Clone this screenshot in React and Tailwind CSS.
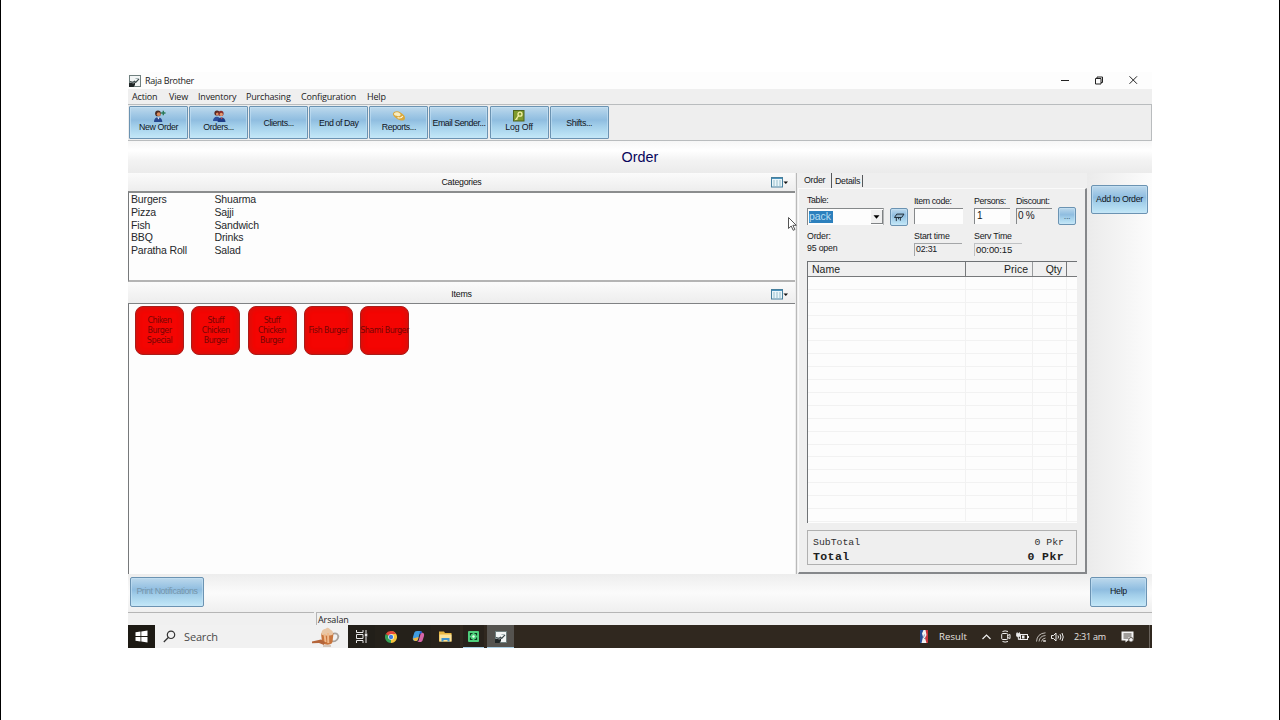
import React from "react";

const gel =
  "border border-[#6b93b2] bg-[linear-gradient(180deg,#bdd9ec_0%,#a4cae6_22%,#8fbde0_42%,#a3cfea_62%,#c3e8f8_100%)] text-[#10151c] shadow-[inset_0_0_0_1px_rgba(200,228,245,0.55)]";
const sans = "font-['Liberation_Sans',Arial,sans-serif]";
const ui = "font-['Open_Sans','Noto_Sans',sans-serif]";

function NewOrderIcon() {
  return (
    <svg className="h-3 w-3.5" viewBox="0 0 14 12">
      <circle cx="6" cy="3.4" r="2.9" fill="#4a2a22" />
      <circle cx="6.7" cy="4.2" r="1.9" fill="#d98a5c" />
      <path d="M2 12c0-3 1.500-4.800 4-4.800s4.300 1.800 4.300 4.800z" fill="#27488f" />
      <path d="M5.200 7.300l1.300 2.200 1.100-2.200z" fill="#e9eef7" />
      <path d="M11.300.8v4.400M9.100 3h4.400" stroke="#2c7a58" strokeWidth="1.400" />
    </svg>
  );
}

function OrdersIcon() {
  return (
    <svg className="h-3 w-3.5" viewBox="0 0 14 12">
      <circle cx="5" cy="3" r="2.600" fill="#5a2620" />
      <circle cx="5.400" cy="3.900" r="1.500" fill="#dd8b62" />
      <circle cx="9" cy="3.400" r="2.600" fill="#8a2d2a" />
      <circle cx="9.300" cy="4.400" r="1.600" fill="#e39a70" />
      <path d="M1 11c0-2.500 1.500-4.300 3.800-4.300S8.500 8.500 8.500 11z" fill="#2d4f9c" />
      <path d="M5.600 12c0-2.700 1.500-4.600 3.900-4.600s4 1.900 4 4.600z" fill="#1f3d86" />
      <path d="M8.600 7.500l1 1.900 1-1.900z" fill="#d84a3c" />
    </svg>
  );
}

function ReportsIcon() {
  return (
    <svg className="h-3 w-3.5" viewBox="0 0 14 12">
      <path d="M1 3.500C2 1 6 .5 8.500 2.500s4.500 3 4.500 5.500-2.500 3-5 2.200S.3 6 1 3.500z" fill="#d9a83c" />
      <path d="M2 3.500C3.500 1.800 6.500 2 8 3.500S8 6.300 6 6.200 1.500 5 2 3.500z" fill="#f7ecc0" />
      <path d="M5.500 7.500c2 .8 4.300.3 5.200-1.500" stroke="#fff6d8" strokeWidth="1.200" fill="none" />
    </svg>
  );
}

function KeyIcon() {
  return (
    <svg className="h-3 w-3" viewBox="0 0 12 12">
      <rect x=".5" y=".5" width="10.500" height="10.500" fill="#7f9a2c" stroke="#4f6420" />
      <circle cx="7" cy="4.200" r="2" fill="none" stroke="#f4efa6" strokeWidth="1.300" />
      <path d="M5.600 5.700L3 9.300l1.600-.3" fill="none" stroke="#f4efa6" strokeWidth="1.200" />
    </svg>
  );
}

function AppIcon({ className }) {
  return (
    <svg className={className} viewBox="0 0 12 12">
      <rect x=".5" y=".5" width="11" height="11" fill="#f2f5f5" stroke="#70807f" />
      <path d="M1 6.500l3 .8 1.500-1 1.200 1.200L10 3.800" fill="none" stroke="#3c4a4c" strokeWidth="1.200" />
      <path d="M0 12V8.200l2-.7 2.200 1L6 7.300V10l-1.500 2z" fill="#1f2526" />
      <path d="M6.500 3.500h3" stroke="#a7b7b8" />
    </svg>
  );
}

function GridIcon() {
  return (
    <svg className="h-[11px] w-[18px]" viewBox="0 0 18 11">
      <rect x=".5" y=".5" width="11" height="9.500" fill="#eaf6fa" stroke="#467f9d" />
      <path d="M1 1.500h10" stroke="#4c93bd" />
      <path d="M2.500 4h1M5.500 4h1M8.500 4h1M2.500 6h1M5.500 6h1M8.500 6h1M2.500 8h1M5.500 8h1M8.500 8h1" stroke="#44869f" />
      <path d="M12.500 4.500h4.500l-2.200 2.500z" fill="#111" />
    </svg>
  );
}

function ToolButton({ label, icon, track = "tracking-[-0.4px]" }) {
  return (
    <button className={`${gel} ${sans} flex h-[33px] w-[59px] shrink-0 flex-col items-center justify-center rounded-[1px] text-[8.800px] leading-[10px] whitespace-nowrap ${icon ? "pb-[3px]" : ""} ${track}`}>
      {icon}
      <span>{label}</span>
    </button>
  );
}

function PaneHeader({ title, className }) {
  return (
    <div className={`flex shrink-0 bg-linear-to-b from-[#fbfbfb] to-[#ededed] ${className}`}>
      <div className={`${sans} flex-1 pl-[24px] text-center text-[8.800px] leading-[10px] tracking-[-0.25px] text-[#111]`}>{title}</div>
      <div className="w-[24px]">
        <GridIcon />
      </div>
    </div>
  );
}

function Tile({ lines }) {
  return (
    <div className="flex size-[49px] shrink-0 flex-col items-center justify-center rounded-[8px] border border-[#a81d1a] bg-[#f40502] pt-px text-center font-['DejaVu_Sans',sans-serif] text-[8px] leading-[10px] tracking-[-0.5px] whitespace-nowrap text-[#760604] shadow-[inset_0_0_4px_2px_rgba(205,20,15,0.75)]">
      {lines.map((l) => (
        <span key={l}>{l}</span>
      ))}
    </div>
  );
}

const categories = [
  ["Burgers", "Shuarma"],
  ["Pizza", "Sajji"],
  ["Fish", "Sandwich"],
  ["BBQ", "Drinks"],
  ["Paratha Roll", "Salad"],
];

const tiles = [
  ["Chiken", "Burger", "Special"],
  ["Stuff", "Chicken", "Burger"],
  ["Stuff", "Chicken", "Burger"],
  ["Fish Burger"],
  ["Shami Burger"],
];

const sunken = "border-t border-l border-[#85888a] bg-[#fdfdfd]";

function LeftPane() {
  return (
    <div className="flex w-[667px] shrink-0 flex-col">
      <PaneHeader title="Categories" className="h-[18px] pt-[4px]" />
      <div className="h-[91px] shrink-0 border-t-2 border-b-2 border-l border-t-[#8b8d8e] border-b-[#b4b4b4] border-l-[#77797b] bg-[#fdfdfd] pl-[2px]">
        {categories.map(([a, b]) => (
          <div key={a} className={`${sans} flex h-[12.750px] text-[10.500px] leading-[12.750px] tracking-[-0.15px] text-[#25282b]`}>
            <span className="w-[83.500px]">{a}</span>
            <span>{b}</span>
          </div>
        ))}
      </div>
      <PaneHeader title="Items" className="h-[21px] pt-[7px]" />
      <div className="flex flex-1 items-start gap-[7.250px] border-t border-l border-t-[#808284] border-l-[#77797b] bg-[#fdfdfd] pt-[2px] pl-[6px]">
        {tiles.map((t, i) => (
          <Tile key={i} lines={t} />
        ))}
      </div>
    </div>
  );
}

function Field({ label, children, className }) {
  return (
    <div className={className}>
      <div className="h-[11px] whitespace-nowrap">{label}</div>
      {children}
    </div>
  );
}

function OrderForm() {
  return (
    <div className={`${sans} text-[8.800px] leading-[8px] tracking-[-0.35px] text-[#15181b]`}>
      <div className="flex h-[35px] pt-[8px]">
        <div className="mr-[6px] w-[77px]">
          <div className="-mt-px h-[12px]">Table:</div>
          <div className={`${sunken} flex h-[17px] border-r border-r-[#b5b7b8]`}>
            <span className="m-[2px] ml-px h-[12px] w-[24px] bg-[#2c80bd] text-[10.500px] leading-[11px] tracking-[-0.1px] text-[#b7def2]">pack</span>
            <span className="mt-px ml-auto flex h-[14px] w-[12px] items-center justify-center border-r border-b border-[#7f8284] bg-[#f0f0f0]">
              <svg className="h-[4px] w-[7px]" viewBox="0 0 7 4">
                <path d="M.5.300h6L3.500 3.700z" fill="#000" />
              </svg>
            </span>
          </div>
        </div>
        <button className={`${gel} mt-[11px] mr-[6px] flex size-[18px] items-center justify-center rounded-[2px]`}>
          <svg className="h-[9px] w-[12px]" viewBox="0 0 13 10">
            <path d="M4 1.200h8L9.500 5h-8z" fill="#8fb2ca" stroke="#16232d" />
            <path d="M3.500 5v4M8 5v3.500M6 5v2" stroke="#16232d" />
          </svg>
        </button>
        <Field label="Item code:" className="mr-[11px] w-[49px]">
          <div className={`${sunken} h-[16px]`} />
        </Field>
        <Field label="Persons:" className="mr-[6px] w-[36px]">
          <div className={`${sunken} h-[16px] pl-[2px] text-[10px] leading-[14px]`}>1</div>
        </Field>
        <Field label="Discount:" className="mr-[6px] w-[36px]">
          <div className="h-[16px] border-t border-l border-[#85888a] bg-[#efefef] pl-px text-[10px] leading-[14px]">0 %</div>
        </Field>
        <button className={`${gel} mt-[10px] size-[18px] rounded-[2px] pb-px text-[9px] leading-[12px]`}>
          <span className="text-[#47667d]">...</span>
        </button>
      </div>
      <div className="flex h-[37px] pt-[8px]">
        <div className="w-[107px] tracking-[-0.2px]">
          <div className="h-[12px]">Order:</div>
          <div>95 open</div>
        </div>
        <div className="mr-[12px] w-[48px]">
          <div className="h-[11px] tracking-[-0.2px]">Start time</div>
          <div className="h-[13px] border-t border-l border-[#a4a6a8] pl-px leading-[11px] tracking-[-0.2px]">02:31</div>
        </div>
        <div className="w-[48px]">
          <div className="h-[11px] tracking-[-0.2px] whitespace-nowrap">Serv Time</div>
          <div className="h-[13px] border-t border-l border-[#c0c2c4] pl-px text-[9.500px] leading-[12px] tracking-[-0.1px]">00:00:15</div>
        </div>
      </div>
    </div>
  );
}

function OrderTable() {
  return (
    <div className="flex h-[262px] flex-col overflow-hidden border-t border-l border-[#6f7275] bg-[#fdfdfd]">
      <div className={`${sans} flex h-[15px] shrink-0 border-b border-[#77797b] bg-[#f0f0f0] text-[10.500px] leading-[15px] text-[#1b1e21]`}>
        <span className="w-[158px] border-r border-[#77797b] pl-[4px]">Name</span>
        <span className="w-[67px] border-r border-[#9a9c9e] pr-[4px] text-right">Price</span>
        <span className="w-[34px] border-r border-[#77797b] pr-[4px] text-right">Qty</span>
      </div>
      {Array.from({ length: 19 }, (_, i) => (
        <div key={i} className="flex h-[12.900px] shrink-0 border-b border-[#f2f2f2]">
          <span className="w-[158px] border-r border-[#f2f2f2]" />
          <span className="w-[67px] border-r border-[#f2f2f2]" />
          <span className="w-[34px] border-r border-[#f2f2f2]" />
        </div>
      ))}
    </div>
  );
}

function OrderPanel() {
  return (
    <div className="flex w-[291px] shrink-0 flex-col border-l border-[#b9b9b9] bg-[#efefef]">
      <div className={`${sans} flex h-[15px] shrink-0 pl-[3px] text-[8.800px] leading-[10px] tracking-[-0.25px] text-[#15181b]`}>
        <div className="w-[32px] border-r border-[#55585b] pt-[2px] pl-[4px]">Order</div>
        <div className="mt-[2px] h-[12px] w-[31px] border-r border-[#55585b] pt-px pl-[3px]">Details</div>
      </div>
      <div className="ml-px flex flex-1 flex-col border-t border-r-2 border-b-2 border-l border-t-[#fafafa] border-r-[#85878a] border-b-[#85878a] border-l-[#fafafa] pr-[8px] pl-[8px]">
        <OrderForm />
        <OrderTable />
        <div className="mt-[7px] h-[35px] border border-[#b0b0b0] px-[5px] pt-[5px] font-['Liberation_Mono','Courier_New',monospace] text-[#303030]">
          <div className="flex h-[14px] justify-between pr-[7px] text-[9.800px] leading-[13px]">
            <span>SubTotal</span>
            <span>0 Pkr</span>
          </div>
          <div className="flex h-[14px] justify-between pr-[7px] text-[11.500px] leading-[14px] font-bold tracking-[0.4px] text-[#202020]">
            <span>Total</span>
            <span>0 Pkr</span>
          </div>
        </div>
      </div>
    </div>
  );
}

function Taskbar() {
  return (
    <div className={`${ui} flex h-[23px] shrink-0 bg-[#30281f] text-[#e8e4e0]`}>
      <div className="flex w-[27px] items-center justify-center bg-[#1d1a14]">
        <svg className="size-[13px]" viewBox="0 0 13 13">
          <path d="M.5 2.200l5-.7v4.600h-5zM6.300 1.400l6.200-.9v5.600H6.300zM.5 6.900h5v4.600l-5-.7zM6.300 6.900h6.200v5.600l-6.200-.9z" fill="#fff" />
        </svg>
      </div>
      <div className="flex w-[193px] items-center bg-[#f1f1f1] text-[#4a4a4a]">
        <svg className="ml-[8px] size-[13px]" viewBox="0 0 13 13">
          <circle cx="8" cy="4.800" r="3.700" fill="none" stroke="#333" strokeWidth="1.200" />
          <path d="M5.300 7.500L.8 12" stroke="#333" strokeWidth="1.200" />
        </svg>
        <span className="ml-[8px] text-[11px] leading-[14px] tracking-[-0.15px]">Search</span>
        <svg className="ml-auto mr-[8px] h-[22px] w-[29px]" viewBox="0 0 29 22">
          <path d="M21 8c5-2 7 1 6 4s-4 4-6 3" fill="none" stroke="#a9a39d" strokeWidth="1.800" />
          <path d="M10 7h12.500l-1 9c-.5 3.500-9.500 3.500-10.500 0z" fill="#c9753c" />
          <path d="M11 5c2-3 4-1 4.500-3C18 1 18 3 20 4s2 2 2 4-10 2.500-12 0z" fill="#e9c6a4" />
          <path d="M13.500 8l1 8M17 7l.3 10" stroke="#efb98b" strokeWidth="2" />
          <path d="M10 13.500l-9 2v1.700L8 17l5 2 1-3z" fill="#b4653a" />
          <path d="M12 20h8" stroke="#c8b8aa" strokeWidth="1.500" />
        </svg>
      </div>
      <div className="flex w-[27px] items-center justify-center bg-[#221f19]">
        <svg className="size-[13px]" viewBox="0 0 13 13" fill="none" stroke="#e8e8e8">
          <path d="M1.500 0v2.500h6.500V0M1.500 13v-2.500h6.500V13M1.500 4.500h6.500v4H1.500zM11 0v3M11 7v6" />
          <rect x="10.300" y="4" width="1.500" height="2" fill="#fff" />
        </svg>
      </div>
      <div className="flex w-[31px] items-center justify-center bg-[#25211a]">
        <svg className="size-[12px]" viewBox="0 0 24 24">
          <path d="M12 12V0a12 12 0 0 1 10.400 6A12 12 0 0 1 12 24z" fill="#f5c33b" />
          <path d="M12 12L12 24A12 12 0 0 1 1.600 6z" fill="#36a055" />
          <path d="M1.600 6A12 12 0 0 1 22.400 6H12v6z" fill="#e5483a" />
          <circle cx="12" cy="12" r="5.600" fill="#fff" />
          <circle cx="12" cy="12" r="4.400" fill="#3d7de0" />
        </svg>
      </div>
      <div className="flex w-[25px] items-center justify-center bg-[#25211a]">
        <svg className="size-[13px]" viewBox="0 0 13 13">
          <path d="M5 1h3.500c1 0 1.300.8 1.600 1.800L7.500 4 6 9.500C5.600 11 5 11 3.500 11 1 11 .3 9.500 1 7l1.200-4C2.600 1.700 3.500 1 5 1z" fill="#3f9ce0" />
          <path d="M9 2.500c2.500 0 3.600 1 3 3.500l-1.300 4C10.300 11.500 9.500 12 8 12H5c1.200 0 1.500-1 1.800-2z" fill="#d765a8" />
          <path d="M1 8.500c.3 1.500 1 2.500 2.500 2.500C5 11 5.500 10.500 6 9l.5-2z" fill="#f0b640" />
          <path d="M8 1.200c1.500 0 1.800.8 2.100 1.800L7.500 4z" fill="#2a56c4" />
        </svg>
      </div>
      <div className="flex w-[29px] items-center justify-center bg-[#28221b]">
        <svg className="h-[11px] w-[13px]" viewBox="0 0 13 11">
          <path d="M0 .5h5l1 1.500h6.500v8.500H0z" fill="#e8b640" />
          <path d="M.5 3.500h12v7H.5z" fill="#fbe39a" />
          <path d="M2.500 7h8v3.500h-2V9h-4v1.500h-2z" fill="#3f94cf" />
        </svg>
      </div>
      <div className="mx-[3px] flex w-[21px] items-center justify-center border-b border-[#a9cfe6] bg-[#28221b] pt-px">
        <svg className="size-[11px]" viewBox="0 0 11 11">
          <rect width="11" height="11" rx="1" fill="#4fd07c" />
          <path d="M2.500 4.500v-2h2M6.500 2.500h2v2M8.500 6.500v2h-2M4.500 8.500h-2v-2" fill="none" stroke="#0f3c22" strokeWidth="1.200" />
          <circle cx="5.500" cy="5.500" r="1.200" fill="#e6ffee" />
        </svg>
      </div>
      <div className="flex w-[27px] items-center justify-center border-b border-[#a9cfe6] bg-[#55534f] pt-px">
        <AppIcon className="size-[12px]" />
      </div>
      <div className="flex flex-1 items-center justify-end text-[9.500px] leading-[12px]">
        <svg className="mr-[11px] h-[13px] w-[8px]" viewBox="0 0 8 13">
          <rect width="8" height="13" rx="1" fill="#f2f2f2" />
          <path d="M0 0h3.500L2 3.500l1 3.500-1.500 6H0z" fill="#244a94" />
          <path d="M5.500 0H8v13H6.500L5 8l1.500-3z" fill="#c8343c" />
          <path d="M4.500 4.500l-1 3 1.500 1.500" fill="none" stroke="#5b6da0" strokeWidth=".7" />
        </svg>
        <span className="w-[43px] tracking-[0.1px]">Result</span>
        <svg className="mr-[10px] h-[6px] w-[9px]" viewBox="0 0 9 6" fill="none" stroke="#eee" strokeWidth="1.200">
          <path d="M.5 5l4-4 4 4" />
        </svg>
        <svg className="mr-[5px] h-[13px] w-[10px]" viewBox="0 0 10 13" fill="none" stroke="#eee">
          <path d="M1.500 1.500Q4 .3 7 1.500M1.500 11.500q2.500 1.200 5.500 0" />
          <rect x=".7" y="3.500" width="6" height="6" rx="1" />
          <path d="M6.500 5.500L9 4.500v4L6.500 7.500" />
        </svg>
        <svg className="mr-[7px] h-[10px] w-[13px]" viewBox="0 0 13 10">
          <rect x="4.500" y="2.500" width="7" height="5" fill="none" stroke="#eee" />
          <path d="M12.500 4v2" stroke="#eee" />
          <rect x="6" y="3.500" width="2.500" height="3" fill="#eee" />
          <path d="M.5 1.500h3.500V4q-.5 1-1.700 1T.5 4zM1.200 0v2M3.400 0v2M2.300 5v2.500h2" fill="#eee" stroke="#eee" strokeWidth=".7" />
        </svg>
        <svg className="mr-[5px] size-[10px]" viewBox="0 0 10 10" fill="none" stroke="#bdb9b4">
          <path d="M.5 9.500Q1 1.500 9.500.8M3 9.500Q3.500 4 9.500 3.500M5.500 9.500Q6 6.500 9.500 6" />
          <path d="M7.500 8.500h2v1h-2z" fill="#fff" />
        </svg>
        <svg className="mr-[9px] h-[10px] w-[14px]" viewBox="0 0 14 10" fill="none" stroke="#eee">
          <path d="M.5 3.500h2L5 1v8L2.500 6.500h-2zM7 3.500q1 1.500 0 3M9 2.200q1.800 2.800 0 5.600M11 1q2.500 4 0 8" />
        </svg>
        <span className="w-[47px] text-[9px] tracking-[-0.25px] whitespace-nowrap">2:31 am</span>
        <svg className="mr-[15px] h-[12px] w-[13px]" viewBox="0 0 13 12">
          <path d="M.5.500h12v9H7l-2.500 2v-2h-4z" fill="#f4f4f4" />
          <path d="M2.500 3h8M2.500 5h8M2.500 7h5" stroke="#3a332c" strokeWidth=".9" />
          <circle cx="10" cy="8.800" r="2.300" fill="#f4f4f4" stroke="#3a332c" strokeWidth=".8" />
        </svg>
        <div className="mr-[2px] h-full w-px bg-[#6a635c]" />
      </div>
    </div>
  );
}

export default function App() {
  return (
    <div className="flex h-[720px] w-[1280px] items-start overflow-hidden border-x border-black bg-white pt-[72px] pl-[127px]">
      <div className="flex h-[576px] w-[1024px] flex-col bg-[#f0f0f0]">
        <header className={`${ui} flex h-[17px] shrink-0 items-center bg-[#fdfdfd] text-[9px] tracking-[-0.3px] text-[#1b1b1b]`}>
          <AppIcon className="ml-px size-[12px]" />
          <span className="ml-[4px]">Raja Brother</span>
          <svg className="mr-[14px] mb-px ml-auto h-[10px] w-[78px]" viewBox="0 0 78 10" fill="none" stroke="#222">
            <path d="M1 5.500h8" />
            <path d="M35.500 3.500h5.500v5.500h-5.500zM37 3.500V2h5.500v5.500H41" />
            <path d="M69.500 1.300l7.500 7.500M77 1.300l-7.500 7.500" />
          </svg>
        </header>
        <nav className={`${ui} flex h-[15px] shrink-0 bg-[#efefef] pl-[4px] text-[9px] leading-[15px] tracking-[-0.18px] text-[#1b1b1b]`}>
          <span className="w-[37px]">Action</span>
          <span className="w-[29px]">View</span>
          <span className="w-[48px]">Inventory</span>
          <span className="w-[55px]">Purchasing</span>
          <span className="w-[66px]">Configuration</span>
          <span>Help</span>
        </nav>
        <div className="flex h-[37px] shrink-0 gap-[1.100px] border-t border-r border-b border-[#b9bcbe] bg-[#eeeeee] pt-px pl-px">
          <ToolButton label="New Order" icon={<NewOrderIcon />} />
          <ToolButton label="Orders..." icon={<OrdersIcon />} />
          <ToolButton label="Clients..." />
          <ToolButton label="End of Day" />
          <ToolButton label="Reports..." icon={<ReportsIcon />} />
          <ToolButton label="Email Sender..." track="tracking-[-0.45px]" />
          <ToolButton label="Log Off" icon={<KeyIcon />} track="tracking-[-0.15px]" />
          <ToolButton label="Shifts..." />
        </div>
        <div className={`${sans} h-[32px] shrink-0 bg-[linear-gradient(180deg,#f6f6f6_0%,#ffffff_30%,#f3f3f3_60%,#ebebeb_100%)] text-center text-[14.400px] leading-[32px] text-[#08065c]`}>Order</div>
        <main className="relative flex h-[401px] shrink-0">
          <LeftPane />
          <div className="w-px bg-[#ededed]" />
          <OrderPanel />
          <div className="flex-1 bg-linear-to-r from-[#ebebeb] to-[#fcfcfc] pt-[11px] pl-[4px]">
            <button className={`${gel} ${sans} h-[29px] w-[57px] rounded-[2px] text-[8.800px] tracking-[-0.3px] whitespace-nowrap`}>Add to Order</button>
          </div>
          <svg className="absolute top-[43px] left-[659px] h-[16px] w-[11px]" viewBox="0 0 11 16">
            <path d="M1.500 1.500v11l2.700-2.500 2 4.300 1.700-.8-2-4.200h3.400z" fill="#fff" stroke="#555" />
          </svg>
        </main>
        <footer className="flex h-[38px] shrink-0 items-start justify-between bg-[linear-gradient(180deg,#ededed_0%,#fbfbfb_50%,#efefef_100%)] pt-[3px] pr-[5px] pl-[2px]">
          <button className={`${gel} ${sans} h-[30px] w-[74px] rounded-[2px] text-[8.800px] tracking-[-0.38px] whitespace-nowrap`}>
            <span className="text-[#7595ab]">Print Notifications</span>
          </button>
          <button className={`${gel} ${sans} h-[30px] w-[57px] rounded-[2px] text-[8.800px] tracking-[-0.3px]`}>Help</button>
        </footer>
        <div className={`${ui} flex h-[13px] shrink-0 gap-[2px] bg-[#f0f0f0] text-[9px] leading-[13px] tracking-[-0.1px] text-[#1b1b1b]`}>
          <div className="w-[186px] border-t border-[#b5b5b5]" />
          <div className="flex-1 border-t border-l border-[#b5b5b5] pl-px">Arsalan</div>
        </div>
        <Taskbar />
      </div>
    </div>
  );
}
